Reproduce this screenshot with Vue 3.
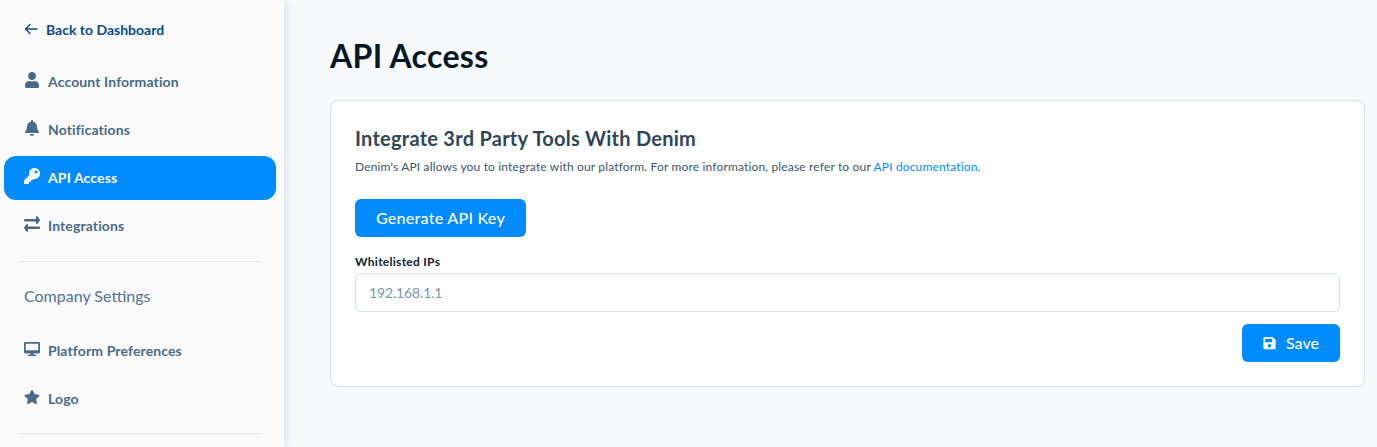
<script setup>
const account = [
  { label: 'Account Information', box: '0 0 448 512', d: 'M224 256c70.7 0 128-57.3 128-128S294.7 0 224 0 96 57.3 96 128s57.3 128 128 128zm89.6 32h-16.7c-22.2 10.2-46.9 16-72.9 16s-50.6-5.8-72.9-16h-16.7C60.2 288 0 348.2 0 422.4V464c0 26.5 21.5 48 48 48h352c26.5 0 48-21.5 48-48v-41.6c0-74.2-60.2-134.4-134.4-134.4z' },
  { label: 'Notifications', box: '0 0 448 512', d: 'M224 512c35.32 0 63.97-28.65 63.97-64H160.03c0 35.35 28.65 64 63.97 64zm215.39-149.71c-19.32-20.76-55.47-51.99-55.47-154.29 0-77.7-54.48-139.9-127.94-155.16V32c0-17.67-14.32-32-31.98-32s-31.98 14.33-31.98 32v20.84C118.56 68.1 64.08 130.3 64.08 208c0 102.3-36.15 133.53-55.47 154.29-6 6.45-8.66 14.16-8.61 21.71.11 16.4 12.98 32 32.1 32h383.8c19.12 0 32-15.6 32.1-32 .05-7.55-2.61-15.27-8.61-21.71z' },
  { label: 'API Access', active: true, box: '0 0 512 512', d: 'M512 176.001C512 273.203 433.202 352 336 352c-11.22 0-22.19-1.062-32.827-3.069l-24.012 27.014A23.999 23.999 0 0 1 261.223 384H224v40c0 13.255-10.745 24-24 24h-40v40c0 13.255-10.745 24-24 24H24c-13.255 0-24-10.745-24-24v-78.059c0-6.365 2.529-12.47 7.029-16.971l161.802-161.802C163.108 213.814 160 195.271 160 176 160 78.798 238.797.001 335.999 0 433.488-.001 512 78.511 512 176.001zM336 128c0 26.51 21.49 48 48 48s48-21.49 48-48-21.49-48-48-48-48 21.49-48 48z' },
  { label: 'Integrations', box: '0 56 512 400', fit: 'none', d: 'M0 168v-16c0-13.255 10.745-24 24-24h360V80c0-21.367 25.899-32.042 40.971-16.971l80 80c9.372 9.373 9.372 24.569 0 33.941l-80 80C409.956 271.982 384 261.456 384 240v-48H24c-13.255 0-24-10.745-24-24zm488 152H128v-48c0-21.314-25.862-32.08-40.971-16.971l-80 80c-9.372 9.373-9.372 24.569 0 33.941l80 80C102.057 463.997 128 453.437 128 432v-48h360c13.255 0 24-10.745 24-24v-16c0-13.255-10.745-24-24-24z' },
]
const company = [
  { label: 'Platform Preferences', box: '0 0 576 512', d: 'M528 0H48C21.5 0 0 21.5 0 48v320c0 26.5 21.5 48 48 48h192l-16 48h-72c-13.3 0-24 10.7-24 24s10.7 24 24 24h272c13.3 0 24-10.7 24-24s-10.7-24-24-24h-72l-16-48h192c26.5 0 48-21.5 48-48V48c0-26.5-21.5-48-48-48zm-16 304H64V64h448v240z' },
  { label: 'Logo', box: '0 0 576 512', d: 'M259.3 17.8L194 150.2 47.9 171.5c-26.2 3.8-36.7 36.1-17.7 54.6l105.7 103-25 145.5c-4.5 26.3 23.2 46 46.4 33.7L288 439.6l130.7 68.7c23.2 12.2 50.9-7.4 46.4-33.7l-25-145.5 105.7-103c19-18.5 8.5-50.8-17.7-54.6L382 150.2 316.7 17.8c-11.7-23.6-45.6-23.9-57.4 0z' },
]
const saveIcon = 'M433.941 129.941l-83.882-83.882A48 48 0 0 0 316.118 32H48C21.49 32 0 53.49 0 80v352c0 26.51 21.49 48 48 48h352c26.51 0 48-21.49 48-48V163.882a48 48 0 0 0-14.059-33.941zM224 416c-35.346 0-64-28.654-64-64 0-35.346 28.654-64 64-64s64 28.654 64 64c0 35.346-28.654 64-64 64zm96-304.52V212c0 6.627-5.373 12-12 12H76c-6.627 0-12-5.373-12-12V108c0-6.627 5.373-12 12-12h228.52c3.183 0 6.235 1.264 8.485 3.515l3.48 3.48A11.996 11.996 0 0 1 320 111.48z'
</script>

<template>
  <div class="page">
    <aside class="sidebar">
      <a class="back">
        <svg class="back-icon" viewBox="0 0 14 12" fill="none" stroke="currentColor" stroke-width="1.4" stroke-linecap="round" stroke-linejoin="round">
          <path d="M13 6H1.5M6 1.5 1.5 6 6 10.5" />
        </svg>
        <span>Back to Dashboard</span>
      </a>
      <nav class="nav">
        <a v-for="item in account" :key="item.label" class="item" :class="{ active: item.active }">
          <svg class="icon" :viewBox="item.box" :preserveAspectRatio="item.fit" fill="currentColor"><path :d="item.d" /></svg>
          <span>{{ item.label }}</span>
        </a>
      </nav>
      <hr class="rule first" />
      <div class="section">Company Settings</div>
      <nav class="nav">
        <a v-for="item in company" :key="item.label" class="item">
          <svg class="icon" :viewBox="item.box" fill="currentColor"><path :d="item.d" /></svg>
          <span>{{ item.label }}</span>
        </a>
      </nav>
      <hr class="rule last" />
    </aside>
    <main class="main">
      <h1 class="title">API Access</h1>
      <section class="card">
        <h2 class="heading">Integrate 3rd Party Tools With Denim</h2>
        <p class="desc">Denim's API allows you to integrate with our platform. For more information, please refer to our <a class="link">API documentation</a>.</p>
        <button class="btn generate" type="button">Generate API Key</button>
        <label class="label" for="ips">Whitelisted IPs</label>
        <input id="ips" class="input" placeholder="192.168.1.1" />
        <div class="actions">
          <button class="btn save" type="button">
            <svg class="save-icon" viewBox="0 0 448 512" fill="currentColor"><path :d="saveIcon" /></svg>
            <span>Save</span>
          </button>
        </div>
      </section>
    </main>
  </div>
</template>

<style>
html, body { margin: 0; height: 100%; overflow: hidden; background: #f7f9fb; }
</style>

<style scoped>
.page {
  display: flex;
  height: 447px;
  overflow: hidden;
  background: #f7f9fb;
  font-family: Lato, "Open Sans", sans-serif;
}
.sidebar {
  flex: 0 0 284px;
  box-sizing: border-box;
  padding: 0 8px 0 4px;
  background: #fafafb;
  box-shadow: 2px 0 10px rgba(122, 144, 170, 0.2);
  z-index: 1;
}
.back {
  display: flex;
  align-items: center;
  box-sizing: border-box;
  height: 60px;
  padding-left: 20px;
  padding-bottom: 2px;
  color: #0b4a87;
  font-size: 14px;
  font-weight: 700;
}
.back-icon { width: 14px; height: 12px; margin-right: 8px; }
.nav { display: flex; flex-direction: column; gap: 4px; }
.item {
  display: flex;
  align-items: center;
  box-sizing: border-box;
  height: 44px;
  padding-left: 20px;
  padding-bottom: 2px;
  border-radius: 12px;
  color: #4a6a85;
  font-size: 14px;
  font-weight: 700;
  letter-spacing: 0.12px;
}
.item.active { background: #008cff; color: #fff; }
.icon { width: 16px; height: 16px; margin-right: 8px; margin-top: -2px; flex: none; }
.rule { border: 0; border-top: 1px solid #e8eaed; margin: 0 14px; }
.rule.first { margin-top: 13px; }
.rule.last { margin-top: 12px; }
.section {
  height: 67px;
  line-height: 68px;
  padding-left: 20px;
  color: #52728c;
  font-size: 16px;
}
.main { flex: 1; min-width: 0; padding: 0 12px 0 46px; }
.title {
  box-sizing: border-box;
  height: 100px;
  margin: 0;
  padding-top: 36px;
  color: #071927;
  font-size: 32px;
  line-height: 40px;
  font-weight: 700;
  letter-spacing: 0.3px;
}
.card {
  box-sizing: border-box;
  height: 287px;
  padding: 24px;
  background: #fff;
  border: 1px solid #d3e0e8;
  border-radius: 8px;
}
.heading {
  margin: 0;
  color: #2f4659;
  font-size: 20px;
  line-height: 26px;
  font-weight: 700;
  letter-spacing: 0.26px;
}
.desc {
  margin: 8px 0 0;
  color: #3e5569;
  font-size: 12px;
  line-height: 16px;
  letter-spacing: 0.16px;
}
.link { color: #008cff; }
.btn {
  display: inline-flex;
  align-items: center;
  justify-content: center;
  box-sizing: border-box;
  height: 38px;
  border: 0;
  border-radius: 6px;
  background: #008cff;
  color: #fff;
  font-family: inherit;
  font-size: 16px;
  font-weight: 500;
}
.generate { display: flex; width: 171px; margin-top: 24px; padding: 0 0 2px; letter-spacing: 0.27px; }
.label {
  display: block;
  margin-top: 17px;
  color: #13202b;
  font-size: 12px;
  line-height: 16px;
  font-weight: 700;
  letter-spacing: 0.27px;
}
.input {
  display: block;
  box-sizing: border-box;
  width: 100%;
  height: 39px;
  margin-top: 3px;
  padding: 0 13px;
  border: 1px solid #d3e0e8;
  border-radius: 6px;
  background: #fff;
  font-family: inherit;
  font-size: 14px;
  letter-spacing: -0.15px;
  outline: none;
}
.input::placeholder { color: #7596ad; opacity: 1; }
.actions { display: flex; justify-content: flex-end; margin-top: 12px; }
.save { width: 98px; padding: 0 0 2px; }
.save-icon { width: 13px; height: 14px; margin-right: 10px; margin-top: 2px; }
</style>
